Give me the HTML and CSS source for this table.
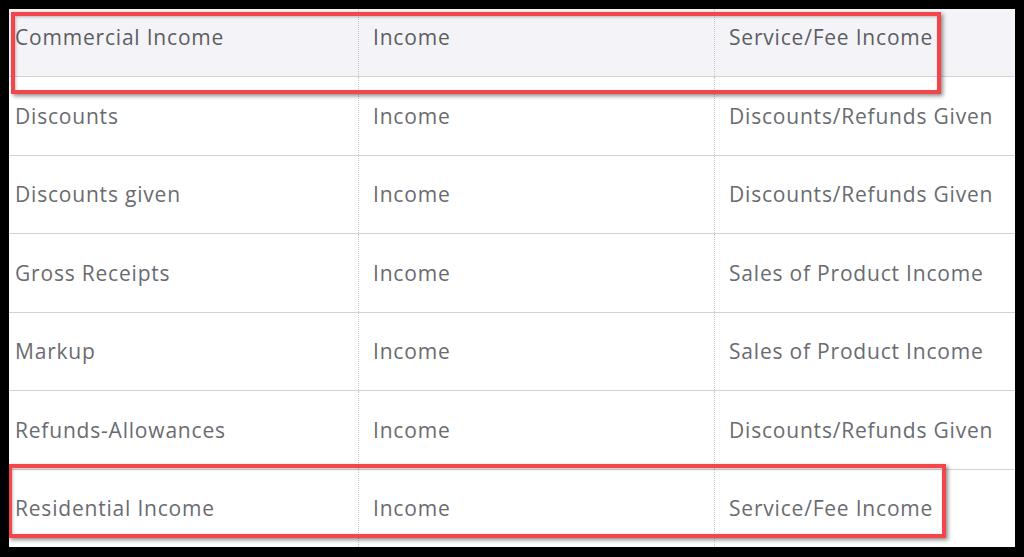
FILE: index.html
```html
<!DOCTYPE html>
<html lang="en">
<head>
  <meta charset="UTF-8">
  <meta name="viewport" content="width=device-width, initial-scale=1.0">
  <title>Chart of Accounts - Income</title>
  <link rel="stylesheet" href="styles.css">
</head>
<body>
  <div class="frame">
    <div class="accounts">
      <div class="row head">
        <div class="cell">Commercial Income</div>
        <div class="cell">Income</div>
        <div class="cell">Service/Fee Income</div>
      </div>
      <div class="row">
        <div class="cell">Discounts</div>
        <div class="cell">Income</div>
        <div class="cell">Discounts/Refunds Given</div>
      </div>
      <div class="row">
        <div class="cell">Discounts given</div>
        <div class="cell">Income</div>
        <div class="cell">Discounts/Refunds Given</div>
      </div>
      <div class="row">
        <div class="cell">Gross Receipts</div>
        <div class="cell">Income</div>
        <div class="cell">Sales of Product Income</div>
      </div>
      <div class="row">
        <div class="cell">Markup</div>
        <div class="cell">Income</div>
        <div class="cell">Sales of Product Income</div>
      </div>
      <div class="row">
        <div class="cell">Refunds-Allowances</div>
        <div class="cell">Income</div>
        <div class="cell">Discounts/Refunds Given</div>
      </div>
      <div class="row">
        <div class="cell">Residential Income</div>
        <div class="cell">Income</div>
        <div class="cell">Service/Fee Income</div>
      </div>
    </div>

    <!-- highlight marks drawn over the table -->
    <div class="mark mark-top"></div>
    <div class="mark mark-bottom"></div>
  </div>
</body>
</html>
```

FILE: styles.css
```css
html, body {
  margin: 0;
  background: #000;
}

.frame {
  position: relative;
  margin: 9px 9px 10px 9px;
  height: 538px;
  background: #fff;
  overflow: hidden;
}

.accounts {
  display: flex;
  flex-direction: column;
  height: 100%;
  font-family: "Open Sans", sans-serif;
  font-size: 21px;
  letter-spacing: 0.8px;
  color: #6a6b70;
}

.row {
  display: grid;
  grid-template-columns: 349px 356px 1fr;
  flex: 1;
  border-top: 1px solid #d2d2d4;
}

.row.head {
  flex: 0 0 67px;
  border-top: none;
  background: #f4f4f8;
  color: #5c5d62;
}

.cell {
  display: flex;
  align-items: center;
  padding-left: 14px;
  border-left: 1px dotted #c4c4c6;
}

.cell:first-child {
  padding-left: 6px;
  border-left: none;
}

.head .cell {
  padding-bottom: 11px;
}

.mark {
  position: absolute;
  border: 4px solid #f3454a;
  box-shadow: 2px 2px 4px rgba(0, 0, 0, 0.45), inset 1px 1px 3px rgba(0, 0, 0, 0.25);
}

.mark-top {
  left: 2px;
  top: 3px;
  width: 922px;
  height: 74px;
}

.mark-bottom {
  left: -1px;
  top: 455px;
  width: 930px;
  height: 66px;
}
```
